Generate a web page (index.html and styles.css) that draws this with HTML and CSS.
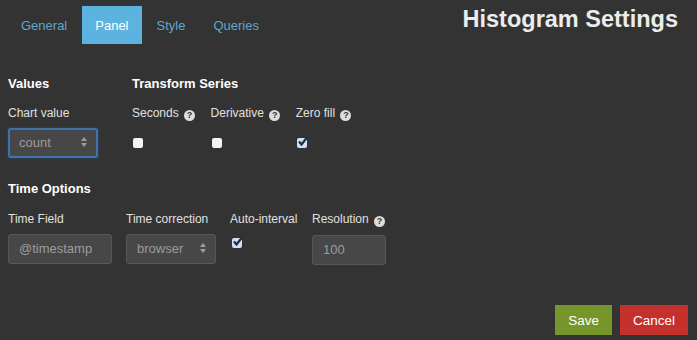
FILE: index.html
```html
<!doctype html>
<html lang="en">
  <head>
    <meta charset="UTF-8" />
    <title>Histogram Settings</title>
    <link rel="stylesheet" href="styles.css">
  </head>
  <body>
    <div class="header">
      <ul class="tabs">
        <li><a href="#">General</a></li>
        <li class="active"><a href="#">Panel</a></li>
        <li><a href="#">Style</a></li>
        <li><a href="#">Queries</a></li>
      </ul>
      <h3 class="title">Histogram Settings</h3>
    </div>

    <div class="row">
      <div class="group values">
        <h5>Values</h5>
        <div class="fields">
          <div class="field">
            <label>Chart value</label>
            <div class="select focus chart-select">count<span class="arrows"></span></div>
          </div>
        </div>
      </div>
      <div class="group">
        <h5>Transform Series</h5>
        <div class="fields transform">
          <div class="field">
            <label>Seconds <i class="tip">?</i></label>
            <span class="check"></span>
          </div>
          <div class="field">
            <label>Derivative <i class="tip">?</i></label>
            <span class="check"></span>
          </div>
          <div class="field">
            <label>Zero fill <i class="tip">?</i></label>
            <span class="check checked">
              <svg width="11" height="11" viewBox="0 0 11 11"><path d="M2 5.5 L4.5 8.5 L10 1.5" fill="none" stroke="#1d2b45" stroke-width="2.2"/></svg>
            </span>
          </div>
        </div>
      </div>
    </div>

    <div class="row time">
      <div class="group">
        <h5>Time Options</h5>
        <div class="fields timefields">
          <div class="field">
            <label>Time Field</label>
            <div class="input timefield">@timestamp</div>
          </div>
          <div class="field">
            <label>Time correction</label>
            <div class="select browser-select">browser<span class="arrows"></span></div>
          </div>
          <div class="field auto">
            <label>Auto-interval</label>
            <span class="check checked">
              <svg width="11" height="11" viewBox="0 0 11 11"><path d="M2 5.5 L4.5 8.5 L10 1.5" fill="none" stroke="#1d2b45" stroke-width="2.2"/></svg>
            </span>
          </div>
          <div class="field">
            <label>Resolution <i class="tip">?</i></label>
            <div class="input resolution">100</div>
          </div>
        </div>
      </div>
    </div>

    <div class="footer">
      <button class="btn save">Save</button>
      <button class="btn cancel">Cancel</button>
    </div>
  </body>
</html>
```

FILE: styles.css
```css
body {
  margin: 0;
  background: #333333;
  font-family: "Liberation Sans", Arial, sans-serif;
  font-size: 12px;
  color: #e4e4e4;
  width: 697px;
  height: 340px;
  overflow: hidden;
}
.header {
  display: flex;
  justify-content: space-between;
  align-items: flex-start;
  padding: 6px 19px 0 8px;
}
.tabs {
  display: flex;
  list-style: none;
  margin: 0;
  padding: 0;
}
.tabs li {
  margin-right: 2px;
}
.tabs a {
  display: block;
  padding: 0 13px;
  height: 38px;
  line-height: 39px;
  font-size: 13px;
  color: #5ba7d0;
  text-decoration: none;
}
.tabs .active a {
  background: #5cb3e0;
  color: #ffffff;
}
.title {
  margin: 0;
  font-size: 23.5px;
  font-weight: bold;
  color: #ececec;
}
.row {
  display: flex;
  padding: 0 8px;
  margin-top: 32px;
}
.row.time {
  margin-top: 23px;
}
.group h5 {
  margin: 0 0 14px;
  font-size: 13px;
  font-weight: bold;
  color: #ffffff;
  line-height: 16px;
}
.time .group h5 {
  margin-bottom: 15px;
}
.values {
  width: 124px;
}
.fields {
  display: flex;
  gap: 15px;
}
.fields.transform {
  gap: 15.5px;
}
.fields.timefields {
  gap: 14px;
}
.field.auto {
  width: 68px;
}
.field label {
  display: block;
  line-height: 14px;
  margin-bottom: 8px;
  color: #e0e0e0;
  white-space: nowrap;
}
.tip {
  display: inline-block;
  width: 11px;
  height: 11px;
  border-radius: 50%;
  background: #dddddd;
  color: #333333;
  font-size: 9px;
  font-weight: bold;
  font-style: normal;
  text-align: center;
  line-height: 11px;
  margin-left: 2px;
  vertical-align: -1px;
}
.input,
.select {
  position: relative;
  box-sizing: border-box;
  height: 30px;
  line-height: 28px;
  padding: 0 10px;
  background: #474747;
  border: 1px solid #575757;
  border-radius: 3px;
  color: #9c9c9c;
  font-size: 13px;
}
.select.focus {
  border: 2px solid #3d73ad;
  line-height: 26px;
  padding-left: 9px;
  box-shadow: 0 0 2px #2a5a8c;
}
.chart-select {
  width: 90px;
}
.browser-select {
  width: 90px;
}
.timefield {
  width: 104px;
}
.resolution {
  width: 74px;
}
.arrows {
  position: absolute;
  right: 9px;
  top: 50%;
  width: 0;
  height: 0;
  margin-top: -6px;
  border-left: 3px solid transparent;
  border-right: 3px solid transparent;
  border-bottom: 4px solid #9c9c9c;
}
.arrows::after {
  content: "";
  position: absolute;
  left: -3px;
  top: 6px;
  border-left: 3px solid transparent;
  border-right: 3px solid transparent;
  border-top: 4px solid #9c9c9c;
}
.check {
  display: block;
  width: 10px;
  height: 10px;
  margin: 17px 0 0 1px;
  background: #f4f4f4;
  border-radius: 2px;
  position: relative;
}
.timefields .check {
  margin-top: 12px;
  margin-left: 2px;
}
.check.checked {
  background: #cfe2f5;
}
.check svg {
  position: absolute;
  left: 0;
  top: -2px;
}
.footer {
  display: flex;
  justify-content: flex-end;
  gap: 8px;
  padding: 0 9px 0 0;
  margin-top: 40px;
}
.btn {
  border: none;
  height: 30px;
  padding: 0 13px;
  font-family: "Liberation Sans", Arial, sans-serif;
  font-size: 13.5px;
  color: #ffffff;
  border-radius: 0;
}
.save {
  background: #76962b;
}
.cancel {
  background: #c4302b;
}
```
